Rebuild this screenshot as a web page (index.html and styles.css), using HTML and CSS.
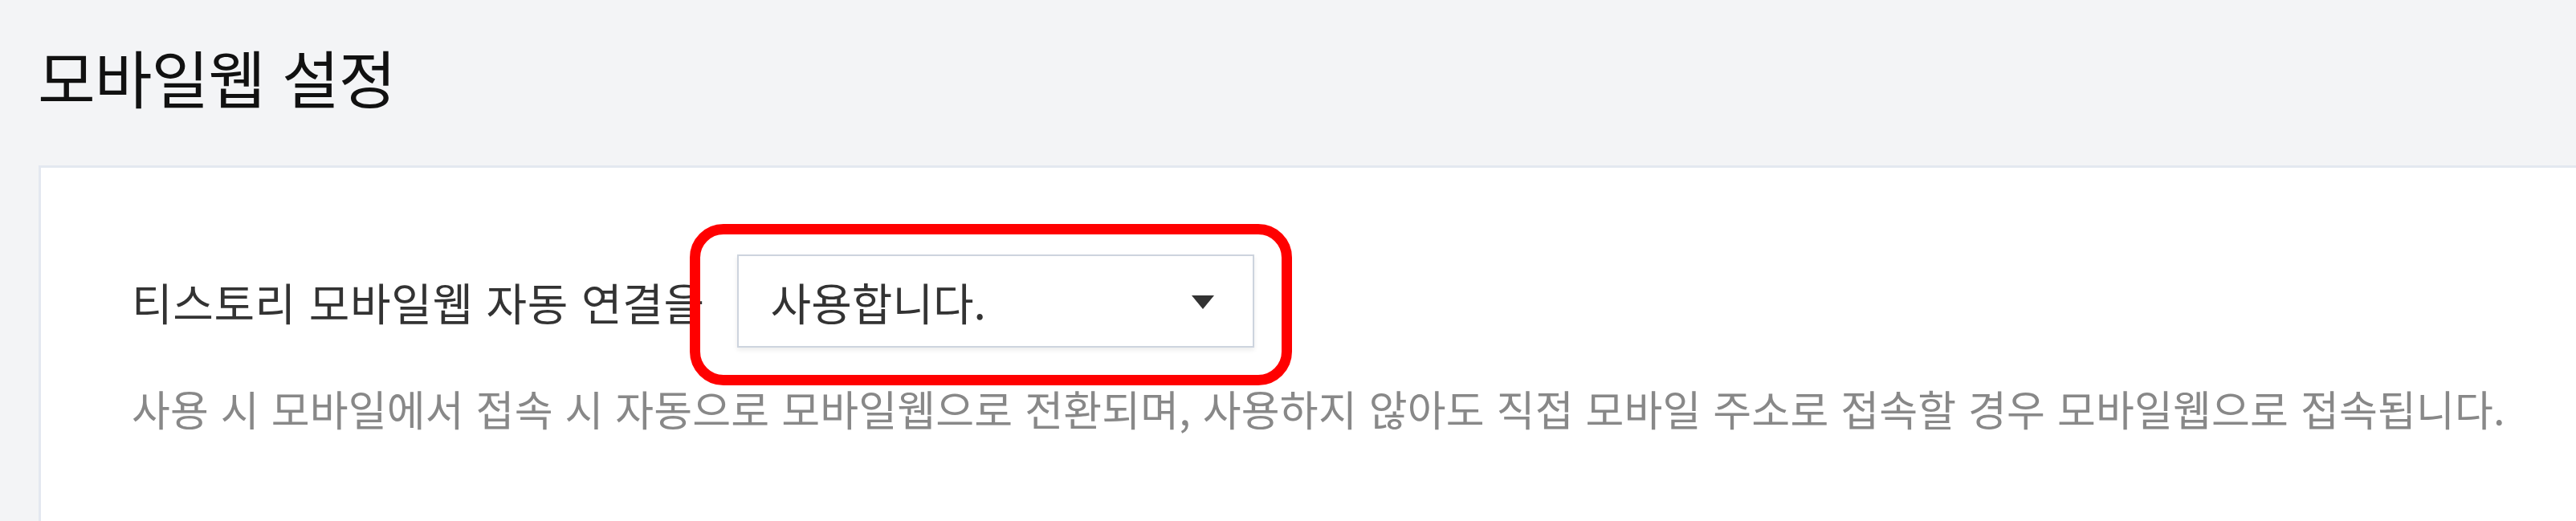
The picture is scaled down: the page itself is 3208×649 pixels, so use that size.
FILE: index.html
```html
<!DOCTYPE html>
<html lang="ko">
<head>
<meta charset="utf-8">
<title>모바일웹 설정</title>
<link rel="stylesheet" href="styles.css">
</head>
<body>
<main class="page">
  <h1 class="page-title">모바일웹 설정</h1>
  <section class="panel">
    <div class="setting-row">
      <span class="setting-label">티스토리 모바일웹 자동 연결을</span>
      <div class="select-wrap">
        <div class="select-box">
          <span class="select-value">사용합니다.</span>
          <svg class="select-arrow" width="28" height="17" viewBox="0 0 28 17"><polygon points="0,0 28,0 14,17" fill="#333"/></svg>
        </div>
        <span class="highlight"></span>
      </div>
    </div>
    <p class="setting-help">사용 시 모바일에서 접속 시 자동으로 모바일웹으로 전환되며, 사용하지 않아도 직접 모바일 주소로 접속할 경우 모바일웹으로 접속됩니다.</p>
  </section>
</main>
</body>
</html>
```

FILE: styles.css
```css
html, body {
  margin: 0;
  padding: 0;
  background: #f3f4f6;
  overflow: hidden;
}
body {
  font-family: "Noto Sans CJK KR", "Noto Sans", sans-serif;
  width: 3208px;
  height: 649px;
}
.page {
  display: flex;
  flex-direction: column;
}
.page-title {
  margin: 0;
  padding: 56px 0 72px 47px;
  font-size: 78px;
  line-height: 78px;
  font-weight: 400;
  letter-spacing: -1px;
  color: #111;
}
.panel {
  margin-left: 48px;
  width: 3200px;
  height: 443px;
  background: #fff;
  border: 3px solid #e3e8f0;
  border-bottom: none;
  padding: 108px 0 0 113px;
  box-sizing: border-box;
}
.setting-row {
  display: flex;
  align-items: center;
  gap: 40px;
}
.setting-label {
  font-size: 55px;
  letter-spacing: 0.6px;
  color: #333;
  white-space: nowrap;
}
.select-wrap {
  position: relative;
}
.select-box {
  width: 644px;
  height: 116px;
  box-sizing: border-box;
  border: 2px solid #cdd4de;
  background: #fff;
  box-shadow: 0 3px 6px rgba(0, 0, 0, 0.08);
  display: flex;
  align-items: center;
  justify-content: space-between;
  padding: 0 48px 0 40px;
}
.select-value {
  font-size: 55px;
  letter-spacing: 0;
  color: #333;
}
.select-arrow {
  display: block;
  margin-top: 2px;
}
.highlight {
  position: absolute;
  left: -59px;
  top: -38px;
  right: -47px;
  bottom: -47px;
  border: 13px solid #ff0000;
  border-radius: 42px;
}
.setting-help {
  margin: 46px 0 0;
  font-size: 52px;
  line-height: 60px;
  letter-spacing: 0.2px;
  color: #888;
  white-space: nowrap;
}
```
